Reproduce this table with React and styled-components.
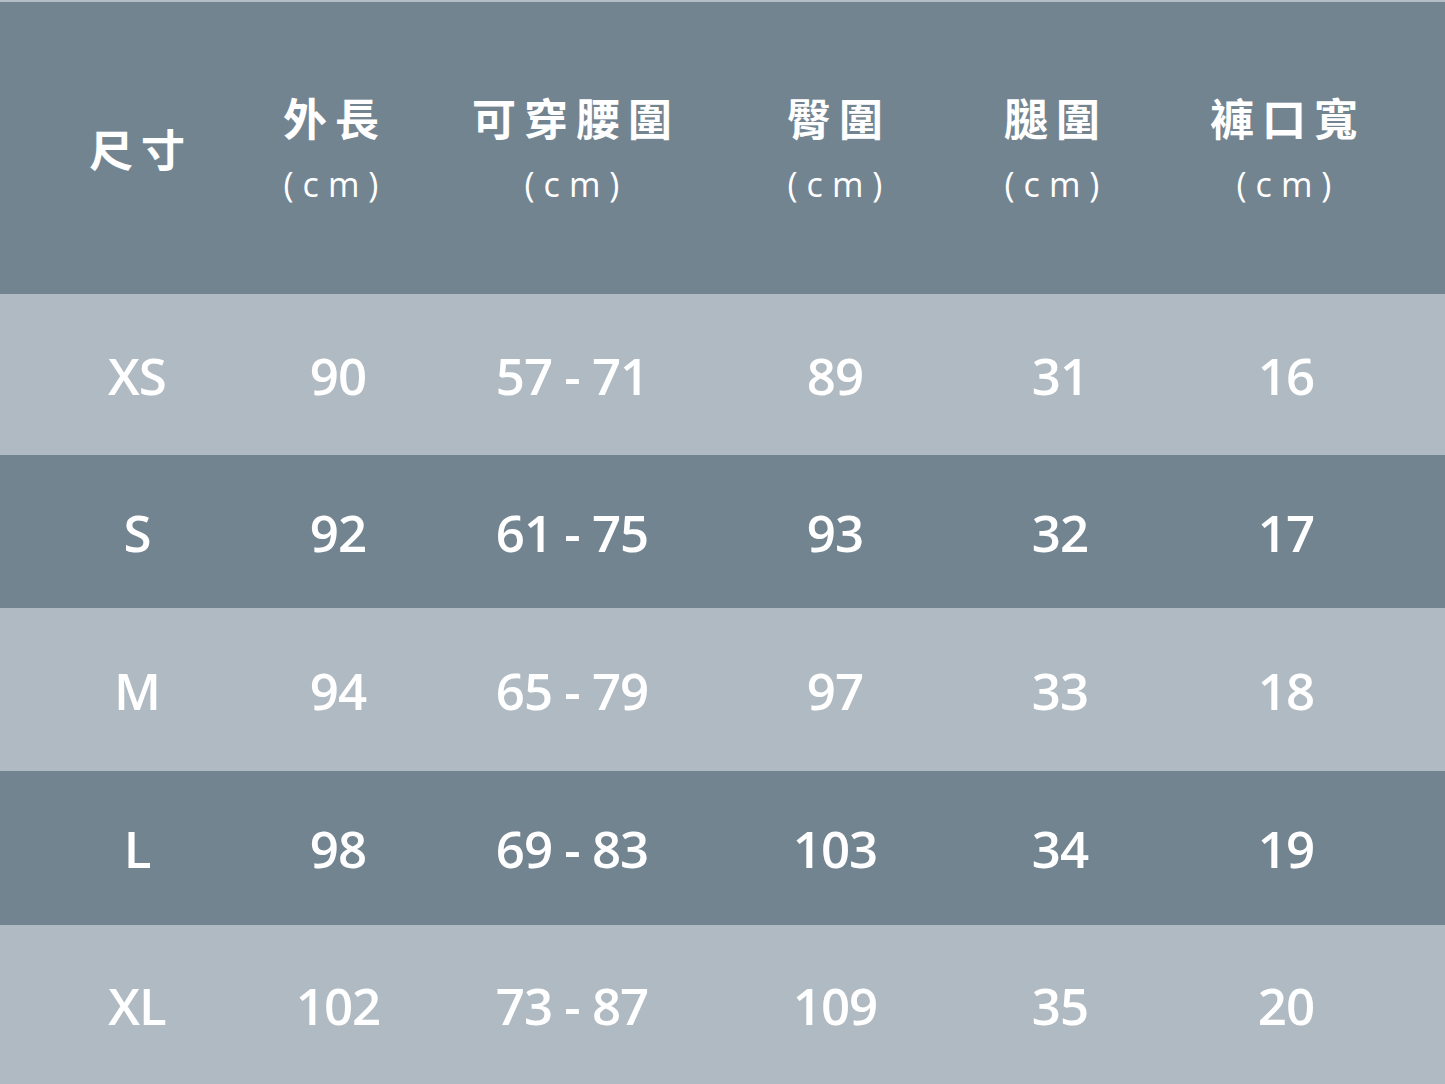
import React from 'react'
import styled, { createGlobalStyle } from 'styled-components'

const GlobalStyle = createGlobalStyle`
  html, body { margin: 0; padding: 0; background: #afbac2; }
  body { font-family: "Open Sans", "Noto Sans CJK TC", sans-serif; }
`

const columns = [
  { title: '尺寸' },
  { title: '外長', unit: true, shift: -5 },
  { title: '可穿腰圍', unit: true },
  { title: '臀圍', unit: true },
  { title: '腿圍', unit: true, shift: -5 },
  { title: '褲口寬', unit: true, shift: -2 },
]

const rows = [
  { h: 161, cells: ['XS', '90', '57 - 71', '89', '31', '16'] },
  { h: 153, cells: ['S', '92', '61 - 75', '93', '32', '17'] },
  { h: 163, cells: ['M', '94', '65 - 79', '97', '33', '18'] },
  { h: 154, cells: ['L', '98', '69 - 83', '103', '34', '19'] },
  { h: 159, cells: ['XL', '102', '73 - 87', '109', '35', '20'] },
]

const Table = () => (
  <Wrap>
    <GlobalStyle />
    <HeadRow>
      {columns.map((c, i) => (
        <HeadCell key={i} $shift={c.shift || 0}>
          <Title $first={i === 0}>{c.title}</Title>
          {c.unit && <Unit>(cm)</Unit>}
        </HeadCell>
      ))}
    </HeadRow>
    {rows.map((r, i) => (
      <Row key={i} $dark={i % 2 === 1} $h={r.h}>
        {r.cells.map((v, j) => (
          <Cell key={j} $shift={j === 1 ? 4 : j === 4 ? 6 : 0}>{v}</Cell>
        ))}
      </Row>
    ))}
  </Wrap>
)

export default Table

const grid = `
  display: grid;
  grid-template-columns: 274px 124px 348px 178px 266px 192px 63px;
`

const Wrap = styled.div`
  width: 1445px;
  height: 1084px;
  overflow: hidden;
  border-top: 2px solid #b3bdc5;
  box-sizing: border-box;
`

const HeadRow = styled.div`
  ${grid}
  height: 292px;
  background: #738491;
  color: #fff;
`

const HeadCell = styled.div`
  position: relative;
  left: ${p => p.$shift}px;
  display: flex;
  flex-direction: column;
  align-items: center;
  justify-content: center;
  padding-bottom: 6px;
`

const Title = styled.div`
  font-family: "Noto Sans CJK TC", sans-serif;
  font-weight: 700;
  font-size: 44px;
  letter-spacing: 8px;
  margin-right: -8px;
  white-space: nowrap;
  line-height: 1;
  margin-top: ${p => (p.$first ? '2px' : '-62px')};
  position: relative;
  top: ${p => (p.$first ? '2px' : '20px')};
`

const Unit = styled.div`
  font-family: "Open Sans", sans-serif;
  font-weight: 500;
  font-size: 34px;
  letter-spacing: 9px;
  margin-right: -9px;
  line-height: 1;
  position: relative;
  top: 48px;
  white-space: nowrap;
`

const Row = styled.div`
  ${grid}
  height: ${p => p.$h}px;
  background: ${p => (p.$dark ? '#738491' : '#afbac2')};
  color: #fff;
`

const Cell = styled.div`
  display: flex;
  align-items: center;
  justify-content: center;
  font-family: "Open Sans", sans-serif;
  font-weight: 600;
  font-size: 51px;
  letter-spacing: -1px;
  padding-left: ${p => p.$shift}px;
`
